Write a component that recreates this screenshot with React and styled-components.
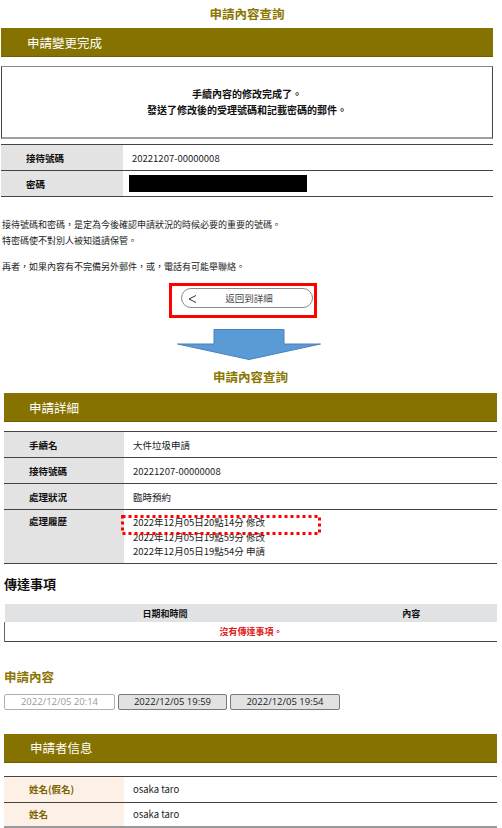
import React from "react";
import styled, { createGlobalStyle } from "styled-components";

const Global = createGlobalStyle`
  html, body { margin: 0; padding: 0; background: #fff; }
  body { font-family: "Noto Sans CJK TC", "Noto Sans CJK JP", sans-serif; color: #222; }
  * { box-sizing: border-box; }
`;

const OLIVE = "#857200";

const Page = styled.div`
  width: 502px;
  height: 828px;
  overflow: hidden;
  position: relative;
`;

const Part = styled.div`
  margin-left: ${(p) => p.$left}px;
  width: ${(p) => p.$width}px;
  display: flex;
  flex-direction: column;
`;

const PageTitle = styled.div`
  height: ${(p) => p.$h || 20}px;
  line-height: ${(p) => p.$h || 20}px;
  margin-top: ${(p) => p.$mt || 0}px;
  text-align: center;
  font-size: 12.5px;
  font-weight: 700;
  color: #8a7600;
`;

const HeaderBar = styled.div`
  height: 29px;
  margin-top: ${(p) => p.$mt || 0}px;
  background: ${OLIVE};
  color: #fff;
  font-size: 12.5px;
  display: flex;
  align-items: center;
  padding-left: ${(p) => p.$pl || 26}px;
  border-bottom: 1px solid #6f5f00;
`;

const DoneBox = styled.div`
  margin-top: 9px;
  height: 73px;
  border: 1px solid #444;
  border-top-color: #888;
  border-bottom: 2px solid #a0a0a0;
  display: flex;
  flex-direction: column;
  justify-content: center;
  align-items: center;
  font-size: 10px;
  font-weight: 700;
  line-height: 16px;
  color: #111;
`;

const Table = styled.table`
  margin-top: ${(p) => p.$mt || 0}px;
  width: 100%;
  border-collapse: collapse;
  font-size: 9.5px;
  border-bottom: ${(p) => (p.$thickBottom ? "2px solid #9a9a9a" : "1px solid #444")};
`;

const Row = styled.tr`
  height: ${(p) => p.$h || 26}px;
  border-top: 1px solid #444;
`;

const Label = styled.td`
  width: ${(p) => p.$w || 120}px;
  background: ${(p) => (p.$peach ? "#fdf1e7" : "#e3e3e4")};
  color: ${(p) => (p.$peach ? "#7a6300" : "#111")};
  font-weight: 700;
  padding: ${(p) => (p.$top ? "4px 0 0 25px" : "0 0 0 25px")};
  vertical-align: ${(p) => (p.$top ? "top" : "middle")};
`;

const Value = styled.td`
  padding: 0 0 0 9px;
  color: #222;
  position: relative;
`;

const HistoryCell = styled.td`
  padding: 5px 0 0 9px;
  vertical-align: top;
  line-height: 14.5px;
  color: #222;
  position: relative;
`;

const DottedMark = styled.svg`
  position: absolute;
  left: -3px;
  top: 5px;
`;

const Redacted = styled.span`
  display: inline-block;
  width: 178px;
  height: 17px;
  background: #000;
  vertical-align: middle;
  margin-left: -3px;
`;

const Note = styled.p`
  margin: ${(p) => p.$mt}px 0 0 1px;
  font-size: 9px;
  line-height: 16px;
  color: #222;
`;

const RedFrame = styled.div`
  margin: 8px 0 0 168px;
  width: 148px;
  height: 35px;
  border: 3px solid #ff0000;
  padding: 2px 0 0 9px;
`;

const BackButton = styled.div`
  position: relative;
  width: 132px;
  height: 20px;
  border: 1px solid #8a8a8a;
  border-radius: 10px;
  display: flex;
  align-items: center;
  justify-content: center;
  font-size: 9.5px;
  color: #444;
  padding-left: 4px;
`;

const Chevron = styled.svg`
  position: absolute;
  left: 6px;
  top: 6px;
`;

const Arrow = styled.svg`
  display: block;
  margin: 11px 0 0 176px;
`;

const SubHeading = styled.div`
  margin-top: ${(p) => p.$mt}px;
  height: 20px;
  line-height: 20px;
  font-size: ${(p) => p.$size || 13}px;
  font-weight: 700;
  color: ${(p) => p.$color || "#111"};
`;

const MsgTable = styled.table`
  margin-top: 10px;
  width: 100%;
  border-collapse: collapse;
  font-size: 9px;
  font-weight: 700;
  border-bottom: 1px solid #444;
`;

const MsgHead = styled.th`
  height: 18px;
  background: #e1e2e4;
  color: #111;
  font-weight: 700;
  width: ${(p) => p.$w || "auto"};
  text-align: center;
`;

const MsgEmpty = styled.td`
  height: 19px;
  color: #e0201a;
  text-align: center;
  border-left: 1px solid #666;
`;

const Tabs = styled.div`
  margin-top: 7px;
  display: flex;
  gap: 3px;
`;

const Tab = styled.div`
  width: ${(p) => p.$w}px;
  height: 16px;
  border: 1px solid ${(p) => (p.$active ? "#b0b0b0" : "#7a7a7a")};
  border-radius: 2px;
  background: ${(p) => (p.$active ? "#fff" : "#e2e2e2")};
  color: ${(p) => (p.$active ? "#9a9a9a" : "#1a1a1a")};
  font-size: 9.5px;
  display: flex;
  align-items: center;
  justify-content: center;
  font-family: "Open Sans", "Noto Sans", sans-serif;
`;

export default function App() {
  return (
    <Page>
      <Global />
      <Part $left={1} $width={492}>
        <PageTitle $h={28}>申請內容查詢</PageTitle>
        <HeaderBar>申請變更完成</HeaderBar>
        <DoneBox>
          <div>手續內容的修改完成了。</div>
          <div>發送了修改後的受理號碼和記載密碼的郵件。</div>
        </DoneBox>
        <Table $mt={5}>
          <tbody>
            <Row>
              <Label $w={122}>接待號碼</Label>
              <Value>20221207-00000008</Value>
            </Row>
            <Row>
              <Label $w={122}>密碼</Label>
              <Value>
                <Redacted />
              </Value>
            </Row>
          </tbody>
        </Table>
        <Note $mt={20}>
          接待號碼和密碼，是定為今後確認申請狀況的時候必要的重要的號碼。
          <br />
          特密碼使不對別人被知道請保管。
        </Note>
        <Note $mt={10}>再者，如果內容有不完備另外郵件，或，電話有可能舉聯絡。</Note>
        <RedFrame>
          <BackButton>
            <Chevron width="9" height="8" viewBox="0 0 9 8">
              <polyline points="8,0.5 1,4 8,7.5" fill="none" stroke="#333" strokeWidth="1" />
            </Chevron>
            返回到詳細
          </BackButton>
        </RedFrame>
        <Arrow width="144" height="31" viewBox="0 0 144 31">
          <polygon
            points="37,0.5 107,0.5 107,15 143.5,15 72,30.5 0.5,15 37,15"
            fill="#5b9bd5"
            stroke="#4a82b8"
            strokeWidth="1"
          />
        </Arrow>
      </Part>

      <Part $left={4} $width={493}>
        <PageTitle $mt={7}>申請內容查詢</PageTitle>
        <HeaderBar $mt={6} $pl={25}>申請詳細</HeaderBar>
        <Table $mt={9}>
          <tbody>
            <Row>
              <Label>手續名</Label>
              <Value>大件垃圾申請</Value>
            </Row>
            <Row>
              <Label>接待號碼</Label>
              <Value>20221207-00000008</Value>
            </Row>
            <Row>
              <Label>處理狀況</Label>
              <Value>臨時預約</Value>
            </Row>
            <Row $h={54}>
              <Label $top>處理履歷</Label>
              <HistoryCell>
                <div>2022年12月05日20點14分 修改</div>
                <div>2022年12月05日19點59分 修改</div>
                <div>2022年12月05日19點54分 申請</div>
                <DottedMark width="200" height="20" viewBox="0 0 200 20">
                  <rect
                    x="1.5"
                    y="1.5"
                    width="197"
                    height="17"
                    fill="none"
                    stroke="#f00"
                    strokeWidth="3"
                    strokeDasharray="3 3"
                  />
                </DottedMark>
              </HistoryCell>
            </Row>
          </tbody>
        </Table>

        <SubHeading $mt={10}>傳達事項</SubHeading>
        <MsgTable>
          <thead>
            <tr>
              <MsgHead $w="321px">日期和時間</MsgHead>
              <MsgHead>內容</MsgHead>
            </tr>
          </thead>
          <tbody>
            <tr>
              <MsgEmpty colSpan={2}>沒有傳達事項。</MsgEmpty>
            </tr>
          </tbody>
        </MsgTable>

        <SubHeading $mt={25} $size={12.5} $color="#8a7600">
          申請內容
        </SubHeading>
        <Tabs>
          <Tab $w={111} $active>
            2022/12/05 20:14
          </Tab>
          <Tab $w={109}>2022/12/05 19:59</Tab>
          <Tab $w={110}>2022/12/05 19:54</Tab>
        </Tabs>

        <HeaderBar $mt={24} $pl={26}>申請者信息</HeaderBar>
        <Table $mt={13} $thickBottom>
          <tbody>
            <Row>
              <Label $peach>姓名(假名)</Label>
              <Value>osaka taro</Value>
            </Row>
            <Row $h={25}>
              <Label $peach>姓名</Label>
              <Value>osaka taro</Value>
            </Row>
          </tbody>
        </Table>
      </Part>
    </Page>
  );
}
